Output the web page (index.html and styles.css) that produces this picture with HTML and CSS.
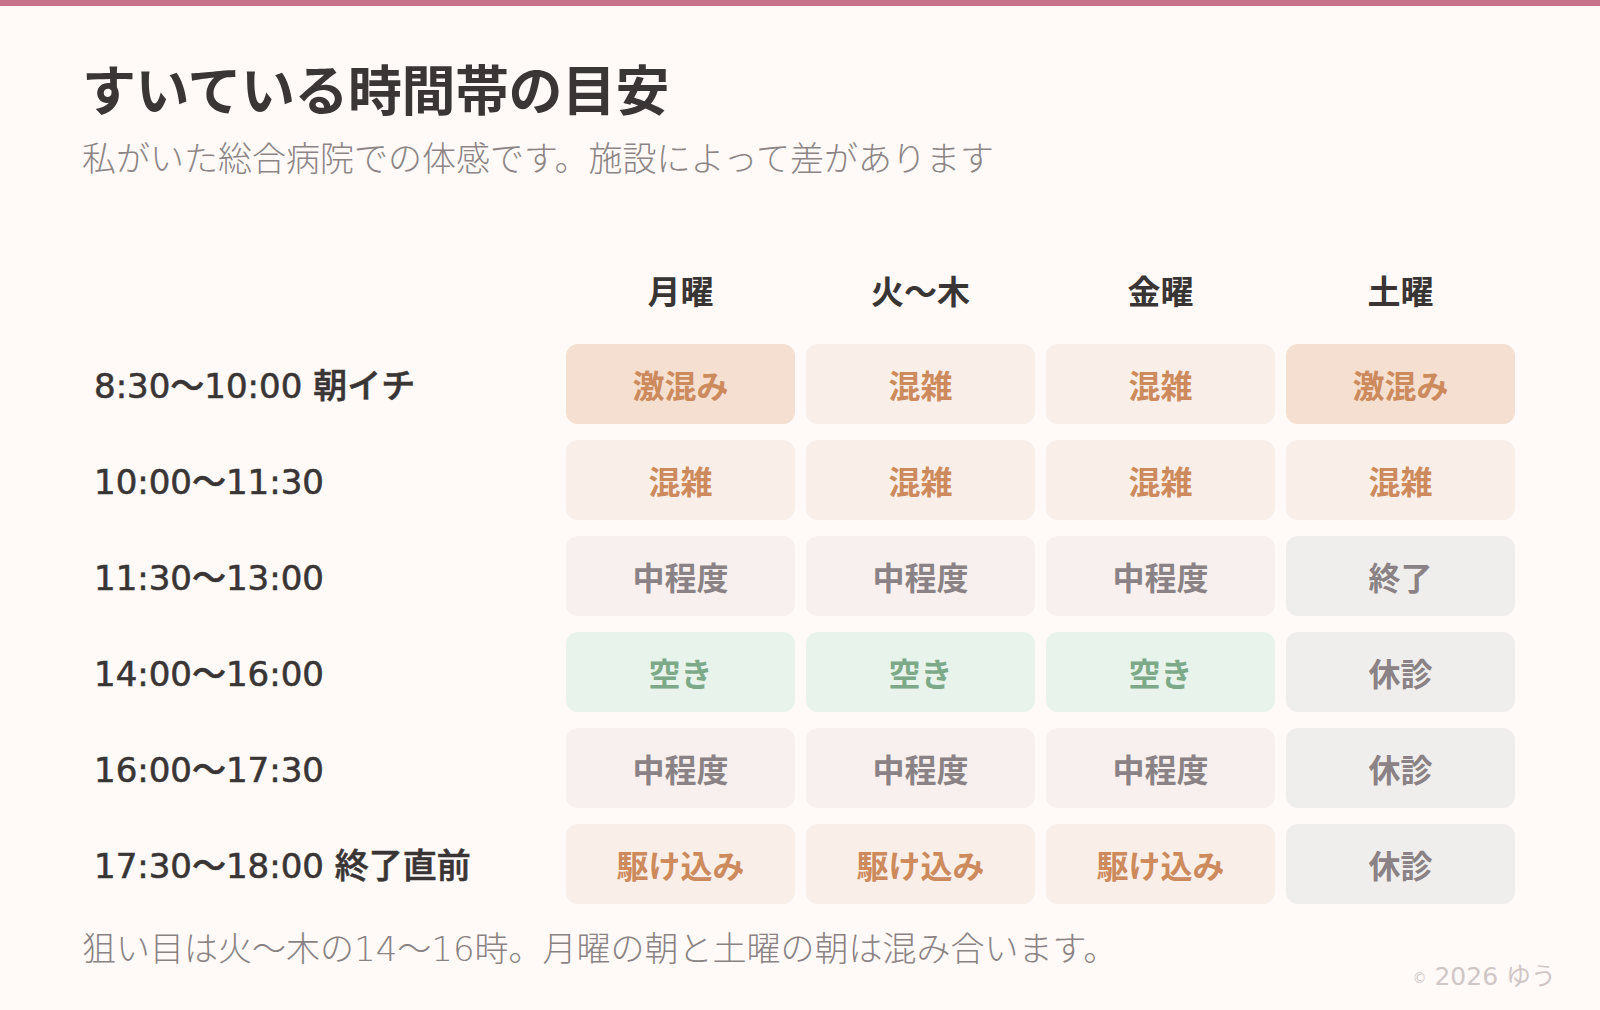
FILE: index.html
```html
<!DOCTYPE html>
<html lang="ja">
<head>
<meta charset="utf-8">
<title>すいている時間帯の目安</title>
<link rel="stylesheet" href="styles.css">
</head>
<body>
<div class="topbar"></div>
<main class="page">
  <h1 class="title">すいている時間帯の目安</h1>
  <p class="subtitle">私がいた総合病院での体感です。施設によって差があります</p>

  <div class="grid">
    <div class="corner"></div>
    <div class="head">月曜</div>
    <div class="head">火〜木</div>
    <div class="head">金曜</div>
    <div class="head">土曜</div>

    <div class="label">8:30〜10:00 朝イチ</div>
    <div class="cell heavy">激混み</div>
    <div class="cell busy">混雑</div>
    <div class="cell busy">混雑</div>
    <div class="cell heavy">激混み</div>

    <div class="label">10:00〜11:30</div>
    <div class="cell busy">混雑</div>
    <div class="cell busy">混雑</div>
    <div class="cell busy">混雑</div>
    <div class="cell busy">混雑</div>

    <div class="label">11:30〜13:00</div>
    <div class="cell mid">中程度</div>
    <div class="cell mid">中程度</div>
    <div class="cell mid">中程度</div>
    <div class="cell closed">終了</div>

    <div class="label">14:00〜16:00</div>
    <div class="cell free">空き</div>
    <div class="cell free">空き</div>
    <div class="cell free">空き</div>
    <div class="cell closed">休診</div>

    <div class="label">16:00〜17:30</div>
    <div class="cell mid">中程度</div>
    <div class="cell mid">中程度</div>
    <div class="cell mid">中程度</div>
    <div class="cell closed">休診</div>

    <div class="label">17:30〜18:00 終了直前</div>
    <div class="cell busy">駆け込み</div>
    <div class="cell busy">駆け込み</div>
    <div class="cell busy">駆け込み</div>
    <div class="cell closed">休診</div>
  </div>

  <p class="note">狙い目は火〜木の14〜16時。月曜の朝と土曜の朝は混み合います。</p>
</main>
<div class="copyright"><span class="copy-mark">©</span> 2026 ゆう</div>
</body>
</html>
```

FILE: styles.css
```css
html, body {
  margin: 0;
  padding: 0;
}

body {
  width: 1600px;
  height: 1010px;
  background: #fffaf7;
  font-family: "Noto Sans CJK JP", "Noto Sans", sans-serif;
  color: #3a3535;
  position: relative;
  overflow: hidden;
}

.topbar {
  height: 6px;
  background: #c7728b;
}

.page {
  padding: 0 85px 0 82px;
}

.title {
  margin: 55px 0 0;
  font-size: 54px;
  line-height: 1;
  font-weight: 700;
  color: #3a3636;
  letter-spacing: -0.5px;
}

.subtitle {
  margin: 25px 0 0;
  font-size: 34px;
  line-height: 1;
  font-weight: 300;
  color: #8c8485;
}

.grid {
  margin-top: 78px;
  width: 1433px;
  display: grid;
  grid-template-columns: 1fr repeat(4, 229px);
  grid-template-rows: 76px repeat(6, 80px);
  column-gap: 11px;
  row-gap: 16px;
}

.head {
  display: flex;
  align-items: center;
  justify-content: center;
  font-size: 33px;
  font-weight: 700;
  color: #3a3535;
}

.label {
  display: flex;
  align-items: center;
  padding: 4px 0 0 12px;
  font-family: "DejaVu Sans", "Noto Sans CJK JP", sans-serif;
  font-size: 34px;
  line-height: 1;
  font-weight: 500;
  color: #3a3535;
  white-space: nowrap;
  -webkit-text-stroke: 0.6px #3a3535;
}

.cell {
  display: flex;
  align-items: center;
  justify-content: center;
  border-radius: 12px;
  font-size: 32px;
  font-weight: 700;
}

.heavy {
  background: #f4dfd0;
  color: #cd8a5c;
}

.busy {
  background: #f9efe8;
  color: #cd8a5c;
}

.mid {
  background: #f7f0ee;
  color: #8a8284;
}

.free {
  background: #e8f3eb;
  color: #7caa88;
}

.closed {
  background: #efeeec;
  color: #8a8284;
}

.note {
  margin: 28px 0 0;
  font-family: "DejaVu Sans", "Noto Sans CJK JP", sans-serif;
  font-size: 34px;
  line-height: 1;
  font-weight: 300;
  color: #8a8283;
}

.copyright {
  position: absolute;
  right: 44px;
  bottom: 21px;
  font-family: "DejaVu Sans", "Noto Sans CJK JP", sans-serif;
  font-size: 25px;
  line-height: 1;
  color: #d0c6c6;
}

.copy-mark {
  font-size: 14px;
  line-height: 1;
  vertical-align: middle;
}
```
